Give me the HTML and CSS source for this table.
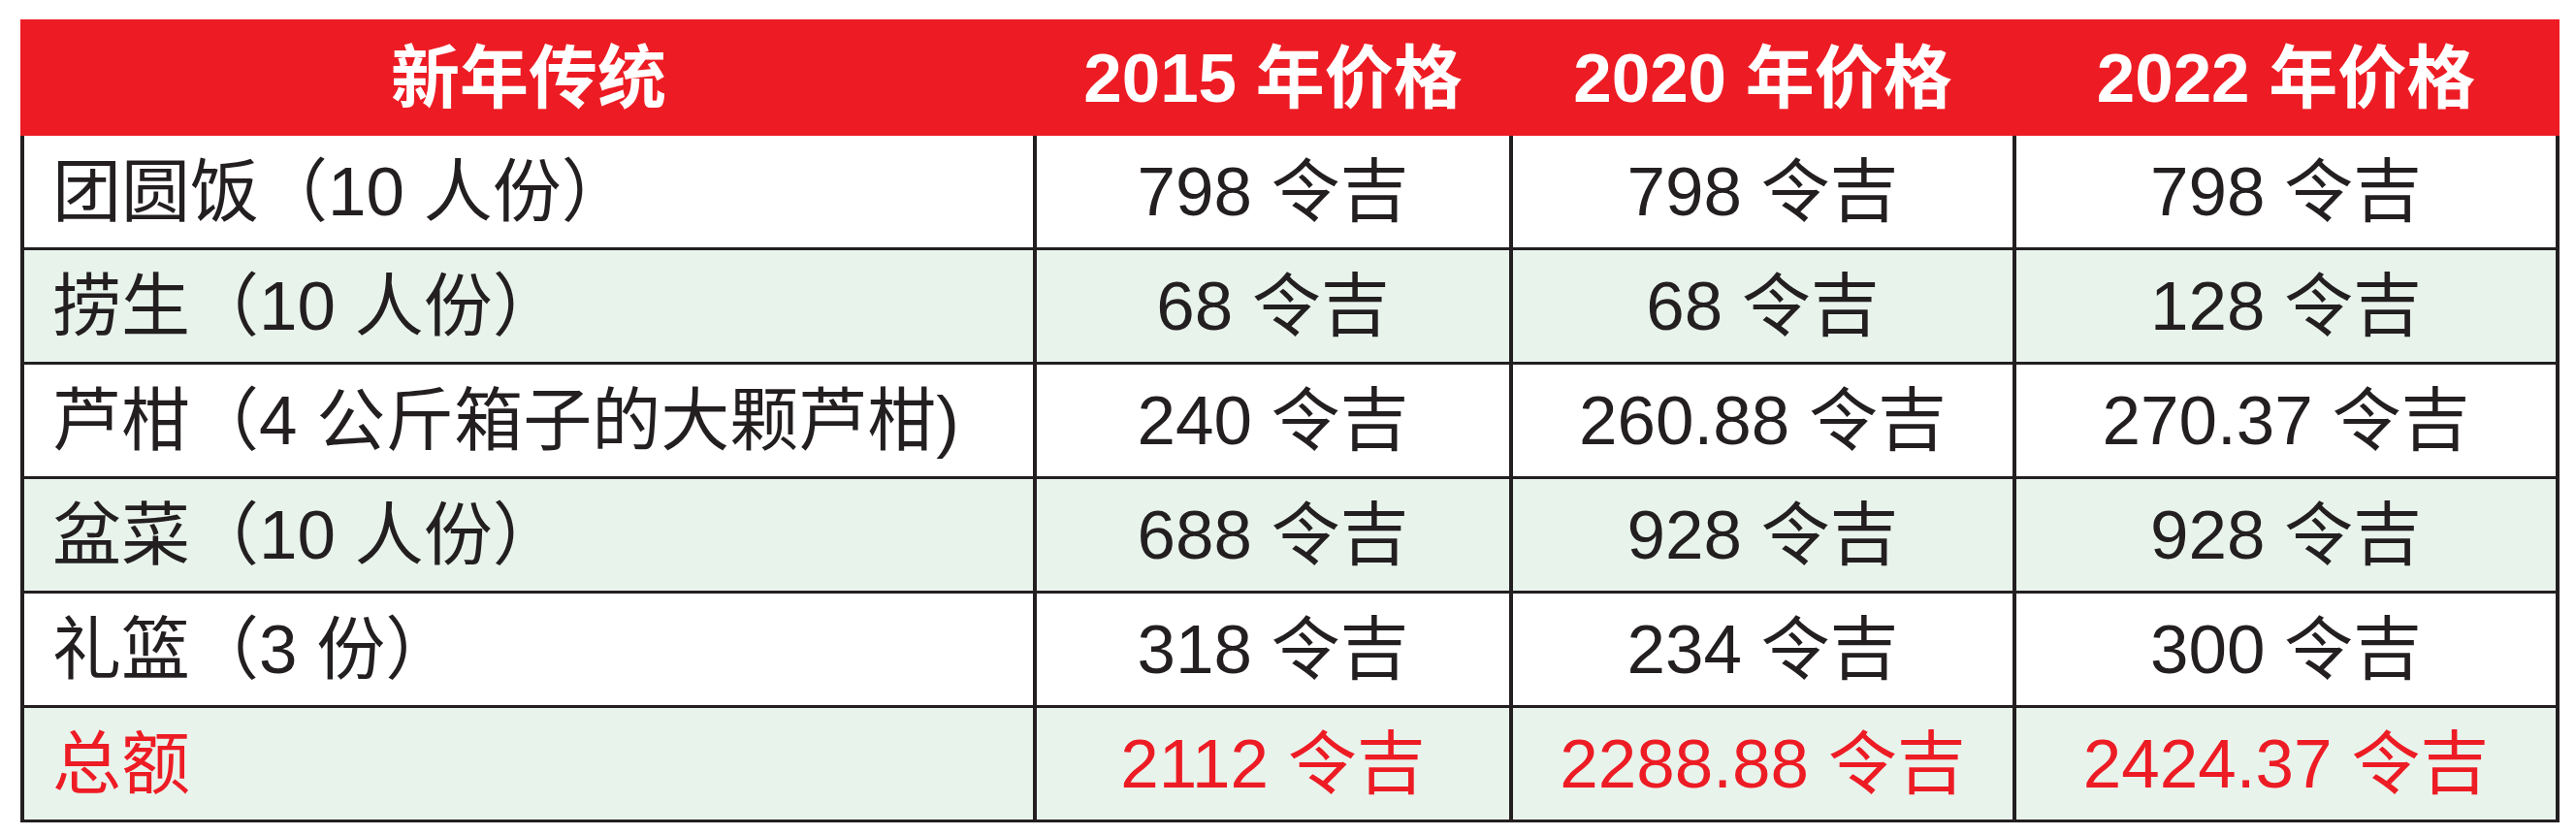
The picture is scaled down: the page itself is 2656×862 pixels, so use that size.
FILE: index.html
```html
<!DOCTYPE html>
<html lang="zh-CN">
<head>
<meta charset="utf-8">
<title>新年传统价格</title>
<link rel="stylesheet" href="styles.css">
</head>
<body>
<div class="sheet">
  <div class="row head">
    <div class="cell">新年传统</div>
    <div class="cell">2015 年价格</div>
    <div class="cell">2020 年价格</div>
    <div class="cell">2022 年价格</div>
  </div>
  <div class="body">
    <div class="row">
      <div class="cell first">团圆饭（10 人份）</div>
      <div class="cell">798 令吉</div>
      <div class="cell">798 令吉</div>
      <div class="cell">798 令吉</div>
    </div>
    <div class="row alt">
      <div class="cell first">捞生（10 人份）</div>
      <div class="cell">68 令吉</div>
      <div class="cell">68 令吉</div>
      <div class="cell">128 令吉</div>
    </div>
    <div class="row">
      <div class="cell first">芦柑（4 公斤箱子的大颗芦柑)</div>
      <div class="cell">240 令吉</div>
      <div class="cell">260.88 令吉</div>
      <div class="cell">270.37 令吉</div>
    </div>
    <div class="row alt">
      <div class="cell first">盆菜（10 人份）</div>
      <div class="cell">688 令吉</div>
      <div class="cell">928 令吉</div>
      <div class="cell">928 令吉</div>
    </div>
    <div class="row">
      <div class="cell first">礼篮（3 份）</div>
      <div class="cell">318 令吉</div>
      <div class="cell">234 令吉</div>
      <div class="cell">300 令吉</div>
    </div>
    <div class="row alt total">
      <div class="cell first">总额</div>
      <div class="cell">2112 令吉</div>
      <div class="cell">2288.88 令吉</div>
      <div class="cell">2424.37 令吉</div>
    </div>
  </div>
</div>
</body>
</html>
```

FILE: styles.css
```css
html, body {
  margin: 0;
  padding: 0;
  background: #ffffff;
}

.sheet {
  margin: 20px 0 0 21px;
  width: 2618px;
  font-family: "Liberation Sans", "Noto Sans CJK SC", sans-serif;
  font-size: 71px;
  color: #231f20;
}

.row {
  display: grid;
  grid-template-columns: 1040px 491px 519px 560px;
}

.cell {
  display: flex;
  align-items: center;
  justify-content: center;
  white-space: nowrap;
  line-height: 1;
}

.cell + .cell {
  border-left: 4px solid #231f20;
}

.head {
  height: 120px;
  background: #ed1c24;
  color: #ffffff;
  font-weight: 700;
  border-left: 4px solid #ed1c24;
  border-right: 4px solid #ed1c24;
}

.head .cell + .cell {
  border-left-color: #ed1c24;
}

.body {
  border-left: 4px solid #231f20;
  border-right: 4px solid #231f20;
}

.body .row {
  box-sizing: border-box;
  height: 118px;
  border-bottom: 3px solid #231f20;
  background: #ffffff;
}

.body .row.alt {
  background: #e8f3ec;
}

.cell.first {
  justify-content: flex-start;
  padding-left: 29px;
}

.total .cell {
  color: #ed1c24;
}
```
